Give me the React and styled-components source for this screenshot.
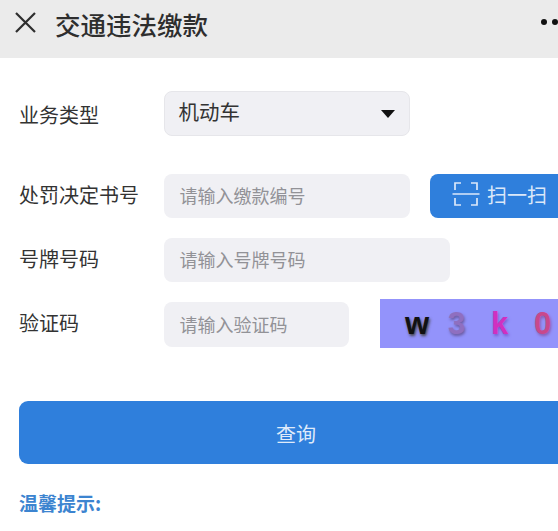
import React from "react";
import styled, { createGlobalStyle } from "styled-components";

const GlobalStyle = createGlobalStyle`
  html, body {
    margin: 0;
    padding: 0;
    width: 558px;
    height: 531px;
    overflow: hidden;
    background: #fff;
  }
  * { box-sizing: border-box; }
`;

const font = `"Noto Sans CJK SC", "Liberation Sans", sans-serif`;

const Page = styled.div`
  width: 580px;
  height: 531px;
  overflow: hidden;
  font-family: ${font};
  color: #333;
`;

const TopBar = styled.header`
  height: 58px;
  background: #ebebeb;
  display: flex;
  align-items: flex-start;
  padding: 11px 0 0 14px;
`;

const Title = styled.h1`
  margin: -2px 0 0 17px;
  font-size: 25.5px;
  line-height: 30px;
  font-weight: 500;
  color: #2e2e2e;
`;

const Dots = styled.div`
  margin-left: auto;
  display: flex;
  gap: 5px;
  padding-top: 8px;
  width: 39px;
  span {
    width: 6px;
    height: 6px;
    border-radius: 50%;
    background: #111;
  }
`;

const Form = styled.main`
  padding: 33px 0 0 19px;
`;

const Row = styled.div`
  display: flex;
  align-items: center;
  height: ${(p) => p.$height || 45}px;
  margin-bottom: ${(p) => p.$gap || 0}px;
`;

const Label = styled.label`
  width: 144.5px;
  flex-shrink: 0;
  font-size: 20px;
  line-height: 28px;
  color: #333;
  position: relative;
  top: ${(p) => p.$nudge || 0}px;
`;

const Field = styled.div`
  width: ${(p) => p.$width}px;
  height: 100%;
  flex-shrink: 0;
  display: flex;
  align-items: center;
  padding: 0 16px 2px;
  background: #f0f0f4;
  border-radius: 8px;
  font-size: 18px;
  color: #929297;
`;

const SelectBox = styled(Field)`
  border: 1px solid #e6e6ea;
  justify-content: space-between;
  padding: 0 14px 6px 14px;
  font-size: 20.5px;
  color: #333;
`;

const Caret = styled.span`
  width: 0;
  height: 0;
  margin-top: 6px;
  border-left: 7px solid transparent;
  border-right: 7px solid transparent;
  border-top: 8px solid #111;
`;

const ScanButton = styled.button`
  margin-left: 20.5px;
  width: 150px;
  height: 44px;
  flex-shrink: 0;
  border: 0;
  border-radius: 8px 0 0 8px;
  background: #2f7fdc;
  color: #dbe8f9;
  display: flex;
  align-items: center;
  gap: 7px;
  padding: 0 0 4px 22px;
  font-family: ${font};
  font-size: 20px;
`;

const Captcha = styled.div`
  margin: -2px 0 0 31.5px;
  width: 200px;
  height: 49px;
  flex-shrink: 0;
  background: #9393fb;
  display: flex;
  align-items: center;
  padding-left: 25px;
  font-family: "Liberation Sans", sans-serif;
  font-size: 31px;
  font-weight: 700;
`;

const CaptchaChar = styled.span`
  width: 43px;
  color: ${(p) => p.$color};
  text-shadow: 1px 2px 3px ${(p) => p.$shadow};
`;

const Submit = styled.button`
  display: block;
  width: 560px;
  height: 63px;
  margin-top: 54px;
  border: 0;
  border-radius: 9px;
  background: #2f7fdc;
  color: #dfeafa;
  font-family: ${font};
  font-size: 20px;
  padding: 2px 6px 0 0;
`;

const TipTitle = styled.h2`
  margin: 26px 0 0 0;
  font-size: 19px;
  line-height: 26px;
  font-weight: 700;
  color: #3c84d0;
`;

const TipText = styled.p`
  margin: 11px 0 0 26px;
  font-size: 17px;
  line-height: 24px;
  white-space: nowrap;
  color: #f0b078;
`;

const ScanIcon = () => (
  <svg width="28" height="28" viewBox="0 0 28 28" fill="none" stroke="#dbe8f9" strokeWidth="1.7">
    <path d="M3 10V3h6M19 3h6v7M0.500 14h27M3 18v7h6M19 25h6v-7" />
  </svg>
);

const CloseIcon = () => (
  <svg width="24" height="24" viewBox="0 0 24 24" fill="none" stroke="#2e2e2e" strokeWidth="2.2">
    <path d="M2 2l19 19M21 2L2 21" />
  </svg>
);

const App = () => {
  return (
    <Page>
      <GlobalStyle />
      <TopBar>
        <CloseIcon />
        <Title>交通违法缴款</Title>
        <Dots>
          <span />
          <span />
          <span />
        </Dots>
      </TopBar>
      <Form>
        <Row $gap={38}>
          <Label $nudge={1}>业务类型</Label>
          <SelectBox $width={246}>
            机动车
            <Caret />
          </SelectBox>
        </Row>
        <Row $height={44} $gap={20}>
          <Label $nudge={-1}>处罚决定书号</Label>
          <Field $width={246}>请输入缴款编号</Field>
          <ScanButton>
            <ScanIcon />
            扫一扫
          </ScanButton>
        </Row>
        <Row $height={44} $gap={20}>
          <Label $nudge={-1}>号牌号码</Label>
          <Field $width={286}>请输入号牌号码</Field>
        </Row>
        <Row>
          <Label $nudge={-2}>验证码</Label>
          <Field $width={185}>请输入验证码</Field>
          <Captcha>
            <CaptchaChar $color="#111" $shadow="#444">w</CaptchaChar>
            <CaptchaChar $color="#8f6fc0" $shadow="#6a5aa0">3</CaptchaChar>
            <CaptchaChar $color="#d030c0" $shadow="#7a5ad0">k</CaptchaChar>
            <CaptchaChar $color="#c8488c" $shadow="#8a5ab0">0</CaptchaChar>
          </Captcha>
        </Row>
        <Submit>查询</Submit>
        <TipTitle>温馨提示:</TipTitle>
        <TipText>请您仔细核对缴款信息,确认无误后再进行缴款操作,谢谢配合使用</TipText>
      </Form>
    </Page>
  );
};

export default App;
